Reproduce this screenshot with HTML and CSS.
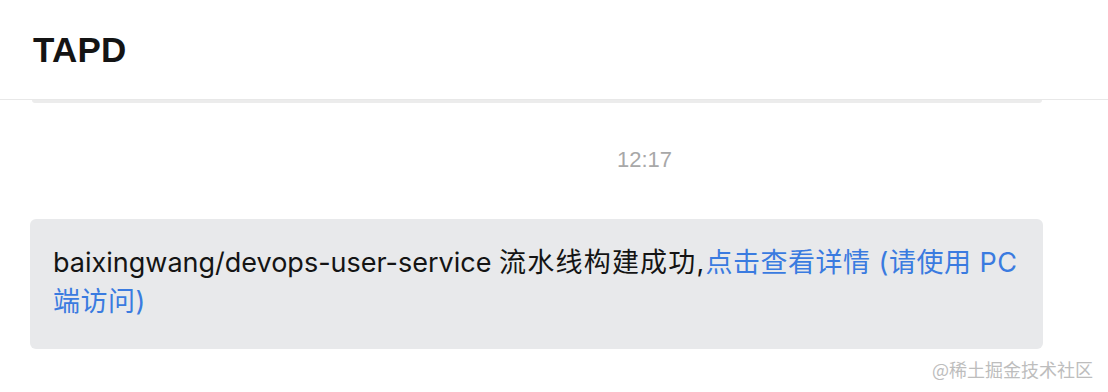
FILE: index.html
```html
<!DOCTYPE html>
<html lang="zh">
<head>
<meta charset="utf-8">
<link rel="stylesheet" href="styles.css">
</head>
<body>
<header class="header"><h1 class="title">TAPD</h1></header>
<div class="peek"></div>
<main class="chat">
  <div class="time">12:17</div>
  <div class="bubble">baixingwang/devops-user-service <span class="zh">流水线构建成功,</span><a class="link" href="#">点击查看详情 (请使用 PC 端访问)</a></div>
</main>
<div class="watermark">@稀土掘金技术社区</div>
</body>
</html>
```
FILE: styles.css
```css
html, body {
  margin: 0;
  padding: 0;
  background: #ffffff;
  font-family: "Liberation Sans", Arial, "Noto Sans CJK SC", sans-serif;
}
.header {
  height: 100px;
  box-sizing: border-box;
  border-bottom: 1px solid #e8e8e8;
  display: flex;
  align-items: center;
  padding-left: 33px;
}
.title {
  margin: 0;
  font-size: 35px;
  font-weight: 700;
  color: #141414;
  letter-spacing: 0.2px;
}
.peek {
  height: 3px;
  margin: 0 66px 0 32px;
  background: #ececec;
  border-radius: 0 0 4px 4px;
}
.chat {
  padding: 44px 65px 0 30px;
  display: flex;
  flex-direction: column;
}
.time {
  align-self: flex-start;
  margin-left: 587px;
  font-size: 22px;
  color: #a8a8a8;
  line-height: 26px;
}
.bubble {
  margin-top: 46px;
  background: #e8e9eb;
  border-radius: 6px;
  padding: 24px 23px 28px 23px;
  font-family: "Inter", "Noto Sans CJK SC", sans-serif;
  font-size: 27px;
  line-height: 39px;
  color: #141414;
}
.zh {
  letter-spacing: 1.2px;
}
.link {
  color: #3a7be0;
  text-decoration: none;
  letter-spacing: 0.5px;
}
.watermark {
  position: absolute;
  right: 15px;
  top: 356px;
  font-size: 18px;
  color: #bdbdbd;
  font-family: "Noto Sans CJK SC", sans-serif;
}
```
